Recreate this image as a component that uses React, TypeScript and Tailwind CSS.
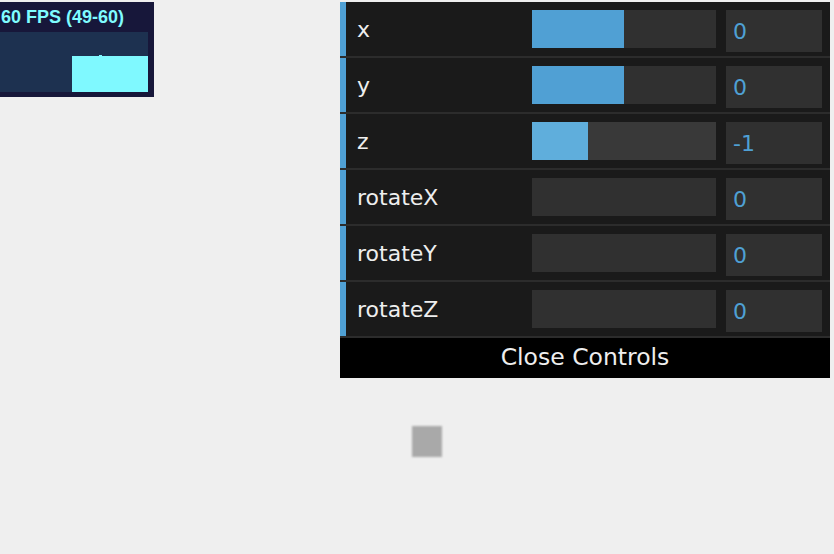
import React from 'react';

type Control = { name: string; value: number; fill: number; hover?: boolean };

const controls: Control[] = [
  { name: 'x', value: 0, fill: 50 },
  { name: 'y', value: 0, fill: 50 },
  { name: 'z', value: -1, fill: 30.4, hover: true },
  { name: 'rotateX', value: 0, fill: 0 },
  { name: 'rotateY', value: 0, fill: 0 },
  { name: 'rotateZ', value: 0, fill: 0 },
];

const StatsPanel = () => (
  <div className="w-[154px] h-[95px] bg-[#17173a] flex flex-col">
    <div className="h-[30px] pl-[1px] pt-[5px] text-[18px] leading-[20px] font-bold text-[#7ffcff] font-['Liberation_Sans',Arial,sans-serif]">
      60 FPS (49-60)
    </div>
    <svg width="148" height="60" viewBox="0 0 148 60" className="block">
      <rect x="0" y="0" width="148" height="60" fill="#1d3150" />
      <rect x="72" y="24" width="76" height="36" fill="#7ff9ff" />
      <rect x="99" y="23" width="3" height="1" fill="#7ff9ff" />
    </svg>
  </div>
);

const Row = ({ c }: { c: Control }) => (
  <div className="h-[56px] flex border-b-2 border-[#2c2c2c]">
    <div className="w-[6px] bg-[#4fa0d4]" />
    <div className="flex-1 flex items-start pt-[8px] pr-[8px] bg-[#1a1a1a]">
      <div className="w-[186px] h-[38px] pl-[11px] flex items-center text-[22px] text-[#eeeeee]">
        {c.name}
      </div>
      <div className={`w-[184px] h-[38px] ${c.hover ? 'bg-[#393939]' : 'bg-[#303030]'}`}>
        <div
          className={`h-full ${c.hover ? 'bg-[#5faedc]' : 'bg-[#50a0d4]'}`}
          style={{ width: `${c.fill}%` }}
        />
      </div>
      <div className="ml-[10px] w-[96px] h-[42px] bg-[#303030] pl-[7px] flex items-center text-[22px] text-[#4fa0d4]">
        {c.value}
      </div>
    </div>
  </div>
);

export default function App() {
  return (
    <div className="relative w-[834px] h-[554px] bg-[#efefef] overflow-hidden font-['DejaVu_Sans',sans-serif]">
      <div className="flex justify-between items-start pt-[2px] pr-[4px]">
        <StatsPanel />
        <div className="w-[490px] flex flex-col">
          {controls.map((c) => (
            <Row key={c.name} c={c} />
          ))}
          <div className="h-[40px] bg-black flex items-center justify-center text-[23.5px] text-[#eeeeee]">
            Close Controls
          </div>
        </div>
      </div>
      {/* canvas object */}
      <div className="absolute left-[412px] top-[426px] w-[30px] h-[31px] bg-[#a9a9a9] blur-[1px]" />
    </div>
  );
}
